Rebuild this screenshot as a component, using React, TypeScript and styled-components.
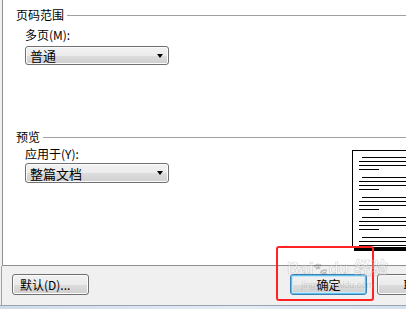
import styled, { createGlobalStyle } from "styled-components";

const GlobalStyle = createGlobalStyle`
    html, body {
        margin: 0;
        padding: 0;
        background: #f0f0f0;
        overflow: hidden;
    }
    body {
        font-family: "Noto Sans CJK SC", "Liberation Sans", sans-serif;
        font-size: 12px;
        color: #000;
    }
`;

// 미리보기 문서의 단락 수
const paragraphs = [0, 1, 2, 3, 4];

export default function App() {
    return (
        <>
            <GlobalStyle />
            <Dialog>
                <Panel>
                    <GroupHeader>
                        <GroupTitle>页码范围</GroupTitle>
                        <GroupLine />
                    </GroupHeader>
                    <Field>
                        <FieldLabel>多页(M):</FieldLabel>
                        <Select>
                            <span>普通</span>
                            <Arrow />
                        </Select>
                    </Field>

                    <GroupHeader top={65}>
                        <GroupTitle>预览</GroupTitle>
                        <GroupLine />
                    </GroupHeader>
                    <PreviewRow>
                        <Field gap={2} labelTop={3}>
                            <FieldLabel>应用于(Y):</FieldLabel>
                            <Select tall>
                                <span>整篇文档</span>
                                <Arrow />
                            </Select>
                        </Field>
                        <Doc>
                            {paragraphs.map((p) => (
                                <Paragraph key={p}>
                                    <DocLine indent={9} />
                                    <DocLine />
                                    <DocLine />
                                    <DocLine short />
                                </Paragraph>
                            ))}
                        </Doc>
                    </PreviewRow>
                </Panel>

                <Footer>
                    <Button first>默认(D)...</Button>
                    <Button primary>确定</Button>
                    <Button>取消</Button>
                </Footer>
                <Frame />

                <Highlight />
                <Watermark>
                    <WaterBig>
                        Bai<Paw>🐾</Paw>du 经验
                    </WaterBig>
                    <WaterSmall>jingyan.baidu.com</WaterSmall>
                </Watermark>
            </Dialog>
        </>
    );
}

const Dialog = styled.div`
    position: relative;
    width: 406px;
    height: 309px;
    overflow: hidden;
    display: flex;
    flex-direction: column;
    background: #f0f0f0;
`;

const Panel = styled.div`
    height: 266px;
    margin-left: 2px;
    border-left: 1px solid #8e8f8f;
    border-bottom: 1px solid #8e8f8f;
    background: #fff;
    padding-left: 13px;
    display: flex;
    flex-direction: column;
    overflow: hidden;
    box-sizing: border-box;
    flex-shrink: 0;
`;

const GroupHeader = styled.div<{ top?: number }>`
    display: flex;
    align-items: center;
    gap: 3px;
    height: 14px;
    margin-top: ${({ top }) => top ?? 8}px;
    flex-shrink: 0;
`;

const GroupTitle = styled.div`
    line-height: 14px;
    white-space: nowrap;
`;

const GroupLine = styled.div`
    flex: 1;
    height: 1px;
    background: #a0a0a0;
    margin-top: 1px;
`;

const Field = styled.div<{ gap?: number; labelTop?: number }>`
    display: flex;
    flex-direction: column;
    gap: ${({ gap }) => gap ?? 4}px;
    margin-left: 9px;
    margin-top: ${({ labelTop }) => labelTop ?? 6}px;
    flex-shrink: 0;
`;

const FieldLabel = styled.div`
    line-height: 14px;
`;

const Select = styled.div<{ tall?: boolean }>`
    width: 144px;
    height: ${({ tall }) => (tall ? 20 : 19)}px;
    box-sizing: border-box;
    border: 1px solid #707070;
    border-radius: 3px;
    background: linear-gradient(
        to bottom,
        #f2f2f2 0%,
        #ebebeb 50%,
        #dddddd 51%,
        #cfcfcf 100%
    );
    box-shadow: inset 0 0 0 1px #fcfcfc;
    display: flex;
    align-items: center;
    justify-content: space-between;
    padding: 0 5px 0 4px;
    font-size: 13px;
`;

const Arrow = styled.div`
    width: 0;
    height: 0;
    border-left: 3.5px solid transparent;
    border-right: 3.5px solid transparent;
    border-top: 4px solid #000;
`;

const PreviewRow = styled.div`
    display: flex;
    align-items: flex-start;
`;

const Doc = styled.div`
    margin-left: 183px;
    margin-top: 6px;
    width: 80px;
    height: 98px;
    box-sizing: border-box;
    border: 1px solid #000;
    background: #fff;
    box-shadow: 2px 3px 0 #000;
    padding: 6px 0 0 6px;
    display: flex;
    flex-direction: column;
    gap: 7px;
    overflow: hidden;
    flex-shrink: 0;
`;

const Paragraph = styled.div`
    display: flex;
    flex-direction: column;
    gap: 3px;
`;

const DocLine = styled.div<{ indent?: number; short?: boolean }>`
    height: 1px;
    background: #000;
    margin-left: ${({ indent }) => (indent ? indent - 6 : 0)}px;
    width: ${({ short }) => (short ? "20px" : "auto")};
`;

const Footer = styled.div`
    flex: 1;
    display: flex;
    align-items: flex-start;
    gap: 10px;
    padding: 8px 0 0 10px;
    border-left: 1px solid #a0a0a0;
    margin-left: 1px;
`;

const Button = styled.div<{ primary?: boolean; first?: boolean }>`
    width: 77px;
    height: 21px;
    flex-shrink: 0;
    box-sizing: border-box;
    border: 1px solid ${({ primary }) => (primary ? "#3c7fb1" : "#707070")};
    border-radius: 3px;
    background: linear-gradient(
        to bottom,
        #f2f2f2 0%,
        #ebebeb 50%,
        #dddddd 51%,
        #cfcfcf 100%
    );
    box-shadow: ${({ primary }) =>
        primary
            ? "inset 0 0 0 1px #5ec0f0, inset 0 0 0 2px #c4e8fa"
            : "inset 0 0 0 1px #fcfcfc"};
    display: flex;
    align-items: center;
    justify-content: ${({ first }) => (first ? "flex-start" : "center")};
    padding-left: ${({ first }) => (first ? 7 : 0)}px;
    margin-left: ${({ primary }) => (primary ? 191 : 0)}px;
    line-height: 14px;
    white-space: nowrap;
    overflow: hidden;
`;

const Frame = styled.div`
    height: 3px;
    flex-shrink: 0;
    border-top: 1px solid #9aa4ae;
    background: linear-gradient(to right, #cfdbe8, #e4edf6 60%, #d4e0ec);
`;

const Highlight = styled.div`
    position: absolute;
    left: 276px;
    top: 246px;
    width: 98px;
    height: 55px;
    box-sizing: border-box;
    border: 2.5px solid #ff2323;
    border-radius: 3px;
    pointer-events: none;
`;

const Watermark = styled.div`
    position: absolute;
    left: 287px;
    top: 258px;
    display: flex;
    flex-direction: column;
    align-items: center;
    pointer-events: none;
    opacity: 0.35;
`;

const WaterBig = styled.div`
    font-family: "Liberation Sans", "Noto Sans CJK SC", sans-serif;
    font-size: 17px;
    font-weight: bold;
    line-height: 22px;
    color: #fff;
    -webkit-text-stroke: 0.6px #888;
    white-space: nowrap;
`;

const Paw = styled.span`
    font-size: 12px;
    vertical-align: top;
    filter: grayscale(1);
`;

const WaterSmall = styled.div`
    font-family: "Liberation Sans", sans-serif;
    font-size: 9px;
    line-height: 10px;
    color: #999;
    white-space: nowrap;
`;
